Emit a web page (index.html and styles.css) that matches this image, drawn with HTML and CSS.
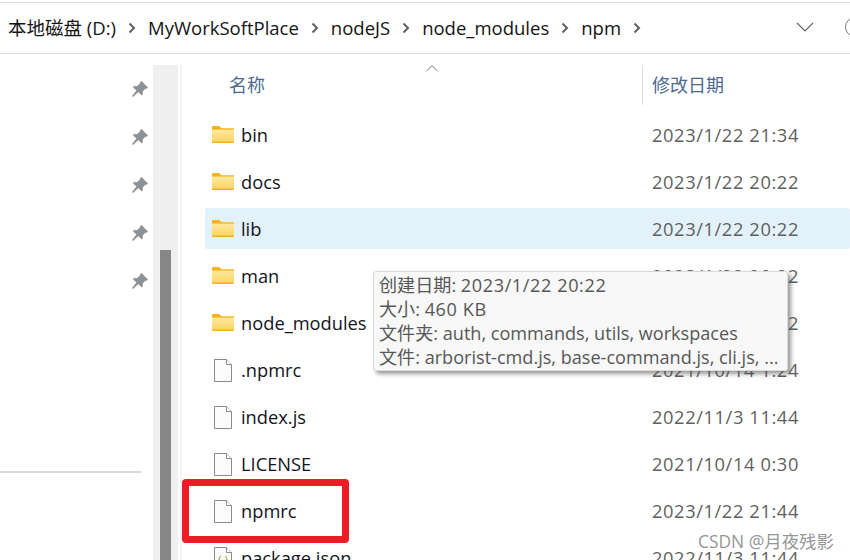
FILE: index.html
```html
<!DOCTYPE html>
<html lang="zh">
<head>
<meta charset="utf-8">
<title>npm</title>
<link rel="stylesheet" href="styles.css">
</head>
<body>
<svg class="defs" width="0" height="0" aria-hidden="true">
  <defs>
    <linearGradient id="fg" x1="0" y1="0" x2="0" y2="1"><stop offset="0" stop-color="#ffe9a0"/><stop offset="1" stop-color="#fcd462"/></linearGradient>
    <symbol id="folder" viewBox="0 0 22 17">
      <path d="M0 1.5C0 .7.5 0 1.3 0h5.2c.5 0 .9.2 1.3.6L9.500 2.300H22V5H0z" fill="#f5b218"/>
      <rect x="0" y="3" width="22" height="14" rx="1" fill="#f2b01e"/>
      <rect x="0" y="3.600" width="22" height="12" fill="url(#fg)"/>
    </symbol>
    <symbol id="file" viewBox="0 0 18 23">
      <path d="M.5.5h12l5 5v17H.5z" fill="#fbfbfb" stroke="#8a8a8a"/>
      <path d="M12.500.5v5h5" fill="#fff" stroke="#8a8a8a"/>
    </symbol>
    <symbol id="file-json" viewBox="0 0 18 23">
      <path d="M.5.5h12l5 5v17H.5z" fill="#fbfbfb" stroke="#8a8a8a"/>
      <path d="M12.500.5v5h5" fill="#fff" stroke="#8a8a8a"/>
      <path d="M7 9c-2 0-1 3.500-2.500 4.500C6 14.500 5 18 7 18M11 9c2 0 1 3.500 2.500 4.500C12 14.500 13 18 11 18" fill="none" stroke="#b9b23c" stroke-width="1.200"/>
    </symbol>
    <symbol id="pin" viewBox="0 0 18 18">
      <path d="M10.500 1 17 7.500l-1.300 1.200-1-.3-3 3 .2 2.900-1.300 1.200-3.200-3.400L2 17l-1-1 4.400-5.500L2 7.300l1.200-1.300 2.900.2 3-3-.3-1z" fill="#8d9296"/>
    </symbol>
    <symbol id="chev" viewBox="0 0 8 12">
      <path d="M1.500 1.500 6 6l-4.500 4.500" fill="none" stroke="#5e5e5e" stroke-width="2"/>
    </symbol>
  </defs>
</svg>
<div class="window">
  <header class="address">
    <nav class="crumbs">
      <span>本地磁盘 (D:)</span><svg class="chev"><use href="#chev"/></svg>
      <span>MyWorkSoftPlace</span><svg class="chev"><use href="#chev"/></svg>
      <span>nodeJS</span><svg class="chev"><use href="#chev"/></svg>
      <span>node_modules</span><svg class="chev"><use href="#chev"/></svg>
      <span>npm</span><svg class="chev"><use href="#chev"/></svg>
    </nav>
    <svg class="drop" viewBox="0 0 18 10"><path d="M1 1l8 8 8-8" fill="none" stroke="#666" stroke-width="1.200"/></svg>
    <span class="refresh"></span>
  </header>
  <main class="body">
    <aside class="nav">
      <ul class="pins">
        <li><svg class="pin"><use href="#pin"/></svg></li>
        <li><svg class="pin"><use href="#pin"/></svg></li>
        <li><svg class="pin"><use href="#pin"/></svg></li>
        <li><svg class="pin"><use href="#pin"/></svg></li>
        <li><svg class="pin"><use href="#pin"/></svg></li>
      </ul>
      <div class="rule"></div>
    </aside>
    <div class="track"><div class="thumb"></div></div>
    <div class="split"></div>
    <section class="list">
      <div class="head">
        <div class="col-name">名称<svg class="sort" viewBox="0 0 12 7"><path d="M.5 6 6 .8 11.500 6" fill="none" stroke="#777"/></svg></div>
        <div class="col-date">修改日期</div>
      </div>
      <div class="row"><svg class="ico"><use href="#folder"/></svg><span class="name">bin</span><span class="date">2023/1/22 21:34</span></div>
      <div class="row"><svg class="ico"><use href="#folder"/></svg><span class="name">docs</span><span class="date">2023/1/22 20:22</span></div>
      <div class="row hover"><svg class="ico"><use href="#folder"/></svg><span class="name">lib</span><span class="date">2023/1/22 20:22</span></div>
      <div class="row"><svg class="ico"><use href="#folder"/></svg><span class="name">man</span><span class="date">2023/1/22 20:22</span></div>
      <div class="row"><svg class="ico"><use href="#folder"/></svg><span class="name">node_modules</span><span class="date">2023/1/22 20:22</span></div>
      <div class="row"><svg class="ico doc"><use href="#file"/></svg><span class="name">.npmrc</span><span class="date">2021/10/14 1:24</span></div>
      <div class="row"><svg class="ico doc"><use href="#file"/></svg><span class="name">index.js</span><span class="date">2022/11/3 11:44</span></div>
      <div class="row"><svg class="ico doc"><use href="#file"/></svg><span class="name">LICENSE</span><span class="date">2021/10/14 0:30</span></div>
      <div class="row"><svg class="ico doc"><use href="#file"/></svg><span class="name">npmrc</span><span class="date">2023/1/22 21:44</span></div>
      <div class="row"><svg class="ico doc"><use href="#file-json"/></svg><span class="name">package.json</span><span class="date">2022/11/3 11:44</span></div>
    </section>
  </main>
  <div class="tooltip">
    <div>创建日期: <span class="wide">2023/1/22 20:22</span></div>
    <div>大小: <span class="wide">460 KB</span></div>
    <div>文件夹: auth, commands, utils, workspaces</div>
    <div>文件: arborist-cmd.js, base-command.js, cli.js, ...</div>
  </div>
  <div class="redbox"></div>
  <div class="mark">CSDN @月夜残影</div>
</div>
</body>
</html>
```
FILE: styles.css
```css
* { box-sizing: border-box; }
html, body { margin: 0; padding: 0; }
body {
  width: 850px; height: 560px; overflow: hidden; background: #fff;
  font-family: "Open Sans", "Noto Sans CJK SC", sans-serif;
}
.defs { position: absolute; }
.window { position: relative; width: 850px; height: 560px; overflow: hidden; }
.address {
  display: flex; align-items: center; height: 52px; margin-top: 2px;
  border-top: 1px solid #dcdcdc; border-bottom: 1px solid #dcdcdc;
  padding: 0 0 2px 8px; font-size: 18.5px; color: #141414;
}
.crumbs { display: flex; align-items: center; flex: 1; gap: 12px; }
.chev { width: 8px; height: 12px; margin-top: 2px; }
.drop { width: 18px; height: 10px; margin-right: 31px; }
.refresh {
  width: 20px; height: 20px; border: 1.500px solid #777; border-radius: 50%;
  margin-right: -15px; flex: none;
}
.body { display: flex; height: 506px; }
.nav { width: 153px; padding-top: 26px; display: flex; flex-direction: column; flex: none; }
.pins { list-style: none; margin: 0; padding: 0 0 0 131px; }
.pins li { height: 48px; }
.pin { width: 18px; height: 18px; display: block; }
.rule { width: 141px; height: 2px; background: #d9d9d9; margin-top: 151px; }
.track { width: 25px; flex: none; margin-top: 11px; background: #efefef; padding: 185px 7px 0; }
.thumb { height: 320px; background: #868686; }
.split { width: 2px; flex: none; margin: 11px 0 0 2px; background: #f4f4f4; }
.list { flex: 1; padding-top: 11px; min-width: 0; }
.head { display: flex; height: 40px; font-size: 18px; color: #4c6a8f; align-items: center; }
.col-name { position: relative; width: 460px; height: 100%; padding: 0 0 3px 47px; display: flex; align-items: center; flex: none; }
.sort { position: absolute; left: 244px; top: 0; width: 12px; height: 7px; }
.col-date { flex: 1; height: 100%; border-left: 1px solid #dddddd; padding: 0 0 3px 9px; display: flex; align-items: center; }
.row {
  display: flex; align-items: center; height: 41px; margin: 0 0 6px 23px;
  font-size: 18.300px; color: #14141c; border-radius: 2px;
}
.head + .row { margin-top: 9px; }
.hover { background: #e3f1fb; }
.ico { width: 22px; height: 17px; margin-left: 7px; flex: none; }
.doc { width: 18px; height: 23px; margin-left: 9px; margin-right: 2px; margin-top: 2px; }
.name { margin-left: 7px; width: 411px; flex: none; }
.date { color: #5f5f5f; white-space: nowrap; letter-spacing: .6px; }
.tooltip {
  position: absolute; left: 373px; top: 271px; width: 415px; height: 100px;
  padding: 1px 0 0 5px; background: #f8f8f8; border: 1px solid #dadada; border-radius: 3px;
  box-shadow: 3px 3px 4px rgba(70,70,70,.55);
  font-size: 18.100px; line-height: 24px; color: #575757; white-space: nowrap;
}
.wide { letter-spacing: .6px; }
.redbox {
  position: absolute; left: 182px; top: 479px; width: 167px; height: 64px;
  border: 7px solid #ee1c25; border-radius: 4px;
}
.mark {
  position: absolute; left: 698px; top: 530px; font-size: 17.400px; line-height: 22px;
  color: rgba(120,120,120,.8); white-space: nowrap;
}
```
